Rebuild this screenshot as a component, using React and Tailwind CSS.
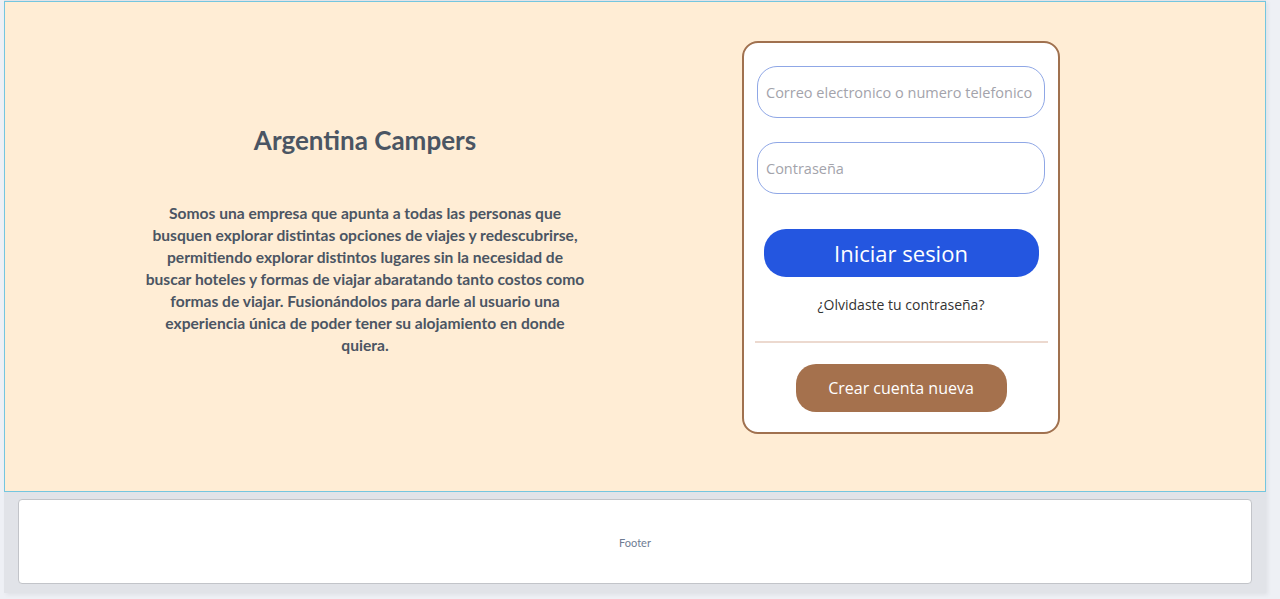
export default function App() {
  return (
    <div className="min-h-[599px] bg-[#eef0f5]" style={{ fontFamily: "Lato, sans-serif" }}>
      <div className="ml-[4px] w-[1262px] bg-[#e1e3e8] pt-[1px] pb-[9px] shadow-[2px_2px_4px_rgba(0,0,0,0.06)]">
        <main className="flex items-start border border-[#74c6df] bg-[#ffedd5] pt-[39px] pb-[57px] pl-[1px]">
          <section className="mt-[83px] flex w-[718px] flex-col items-center text-[#4b5563]">
            <h1 className="text-[26px] font-bold leading-[32px]">Argentina Campers</h1>
            <p className="mt-[46px] w-[480px] text-center text-[15.6px] font-bold leading-[22px]">
              Somos una empresa que apunta a todas las personas que
              <br />
              busquen explorar distintas opciones de viajes y redescubrirse,
              <br />
              permitiendo explorar distintos lugares sin la necesidad de
              <br />
              buscar hoteles y formas de viajar abaratando tanto costos como
              <br />
              formas de viajar. Fusionándolos para darle al usuario una
              <br />
              experiencia única de poder tener su alojamiento en donde
              <br />
              quiera.
            </p>
          </section>
          <div
            className="ml-[18px] flex h-[393px] w-[318px] flex-col items-center rounded-[16px] border-2 border-[#a0714f] bg-white pt-[23px]"
            style={{ fontFamily: "'Open Sans', sans-serif" }}
          >
            <input
              placeholder="Correo electronico o numero telefonico"
              className="h-[52px] w-[288px] rounded-[20px] border border-[#8fa7e6] bg-white px-[8px] text-[14.5px] text-gray-700 outline-none placeholder:text-[#a3a3ab]"
            />
            <input
              placeholder="Contraseña"
              type="text"
              className="mt-[24px] h-[52px] w-[288px] rounded-[20px] border border-[#8fa7e6] bg-white px-[8px] text-[14.5px] text-gray-700 outline-none placeholder:text-[#a3a3ab]"
            />
            <button className="mt-[35px] h-[48px] w-[275px] rounded-[22px] bg-[#2456e0] text-[22px] text-white">
              Iniciar sesion
            </button>
            <a className="mt-[18px] text-[14px] leading-[20px] text-[#333]">¿Olvidaste tu contraseña?</a>
            <div className="mt-[26px] h-[2px] w-[293px] bg-[#ecd9cf]" />
            <button className="mt-[21px] h-[48px] w-[211px] rounded-[20px] bg-[#a5714d] text-[16px] text-white">
              Crear cuenta nueva
            </button>
          </div>
        </main>
        <footer className="mx-[14px] mt-[7px] flex h-[85px] items-center justify-center rounded-[4px] border border-[#c2c4c9] bg-white">
          <span className="mt-[4px] text-[11px] text-[#6e7c93]">Footer</span>
        </footer>
      </div>
    </div>
  );
}
